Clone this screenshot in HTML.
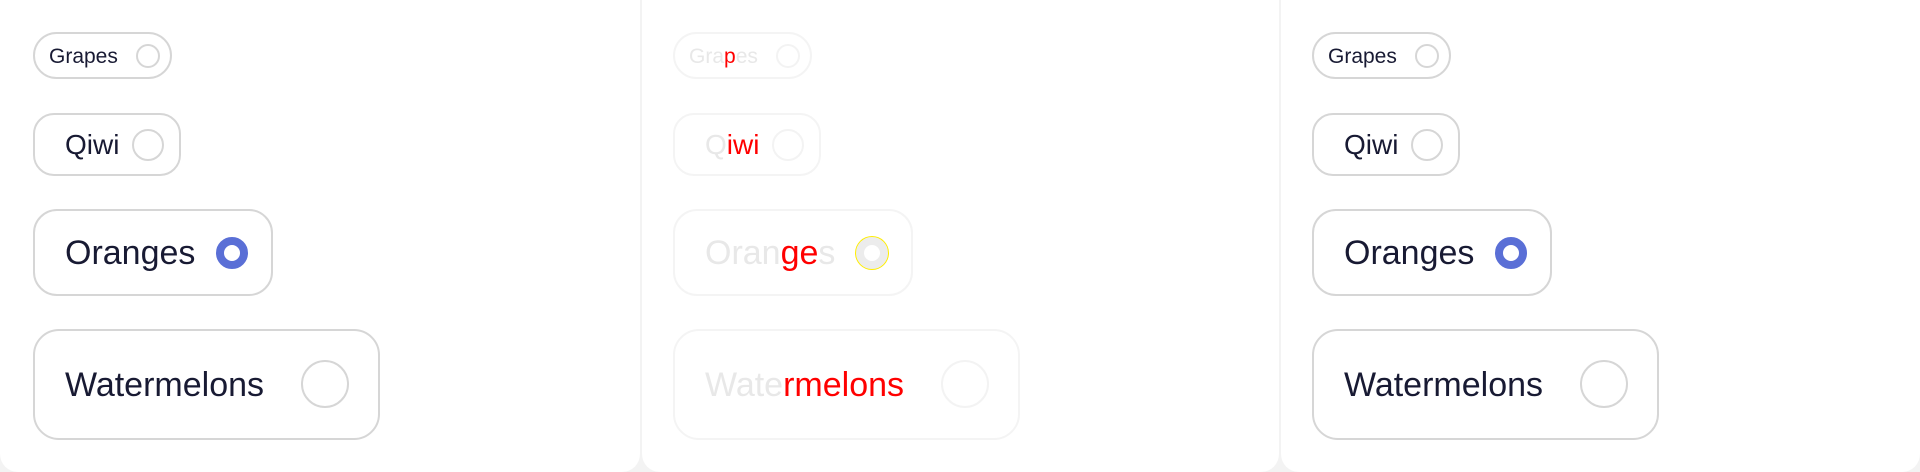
<!DOCTYPE html>
<html><head><meta charset="utf-8"><style>
html,body{margin:0;padding:0;width:1920px;height:472px;overflow:hidden;background:#f3f3f3;font-family:"Liberation Sans",sans-serif;}
.panel{position:absolute;top:-20px;height:492px;background:#fff;border-radius:0 0 18px 18px;}
.pill{position:absolute;box-sizing:border-box;border:2px solid #d6d6d6;background:#fff;color:#181a33;}
.pill span.t{position:absolute;white-space:nowrap;line-height:1;}
.r{position:absolute;box-sizing:border-box;border:2px solid #d6d6d6;border-radius:50%;background:#fff;}
.dis .pill{border-color:#f4f4f4;color:#e8e8e8;}
.dis .r{border-color:#f3f3f3;}
.red{color:#ff0000;}
</style></head><body>
<div class="panel" style="left:0;width:640px"></div>
<div class="panel" style="left:642px;width:637px"></div>
<div class="panel" style="left:1281px;width:639px"></div>

<!-- Panel template -->
<div style="position:absolute;left:0;top:0">
 <div class="pill" style="left:33px;top:32px;width:139px;height:47px;border-radius:24px"><span class="t" style="left:14px;top:12px;font-size:21px">Grapes</span><div class="r" style="left:101px;top:10px;width:24px;height:24px"></div></div>
 <div class="pill" style="left:33px;top:113px;width:148px;height:63px;border-radius:21px"><span class="t" style="left:30px;top:16px;font-size:28px">Qiwi</span><div class="r" style="left:97px;top:14px;width:32px;height:32px"></div></div>
 <div class="pill" style="left:33px;top:209px;width:240px;height:87px;border-radius:24px"><span class="t" style="left:30px;top:25px;font-size:34px">Oranges</span><div class="r" style="left:181px;top:26px;width:32px;height:32px;border:8px solid #5a6fd6"></div></div>
 <div class="pill" style="left:33px;top:329px;width:347px;height:111px;border-radius:26px"><span class="t" style="left:30px;top:37px;font-size:34px">Watermelons</span><div class="r" style="left:266px;top:29px;width:48px;height:48px"></div></div>
</div>

<div class="dis" style="position:absolute;left:640px;top:0">
 <div class="pill" style="left:33px;top:32px;width:139px;height:47px;border-radius:24px"><span class="t" style="left:14px;top:12px;font-size:21px">Gra<span class="red">p</span>es</span><div class="r" style="left:101px;top:10px;width:24px;height:24px"></div></div>
 <div class="pill" style="left:33px;top:113px;width:148px;height:63px;border-radius:21px"><span class="t" style="left:30px;top:16px;font-size:28px">Q<span class="red">iwi</span></span><div class="r" style="left:97px;top:14px;width:32px;height:32px"></div></div>
 <div class="pill" style="left:33px;top:209px;width:240px;height:87px;border-radius:24px"><span class="t" style="left:30px;top:25px;font-size:34px">Oran<span class="red">ge</span>s</span><div class="r" style="left:181px;top:26px;width:32px;height:32px;border:8px solid #ececec;box-shadow:0 0 0 1px #ffee00"></div></div>
 <div class="pill" style="left:33px;top:329px;width:347px;height:111px;border-radius:26px"><span class="t" style="left:30px;top:37px;font-size:34px">Wate<span class="red">rmelons</span></span><div class="r" style="left:266px;top:29px;width:48px;height:48px"></div></div>
</div>

<div style="position:absolute;left:1279px;top:0">
 <div class="pill" style="left:33px;top:32px;width:139px;height:47px;border-radius:24px"><span class="t" style="left:14px;top:12px;font-size:21px">Grapes</span><div class="r" style="left:101px;top:10px;width:24px;height:24px"></div></div>
 <div class="pill" style="left:33px;top:113px;width:148px;height:63px;border-radius:21px"><span class="t" style="left:30px;top:16px;font-size:28px">Qiwi</span><div class="r" style="left:97px;top:14px;width:32px;height:32px"></div></div>
 <div class="pill" style="left:33px;top:209px;width:240px;height:87px;border-radius:24px"><span class="t" style="left:30px;top:25px;font-size:34px">Oranges</span><div class="r" style="left:181px;top:26px;width:32px;height:32px;border:8px solid #5a6fd6"></div></div>
 <div class="pill" style="left:33px;top:329px;width:347px;height:111px;border-radius:26px"><span class="t" style="left:30px;top:37px;font-size:34px">Watermelons</span><div class="r" style="left:266px;top:29px;width:48px;height:48px"></div></div>
</div>
</body></html>
